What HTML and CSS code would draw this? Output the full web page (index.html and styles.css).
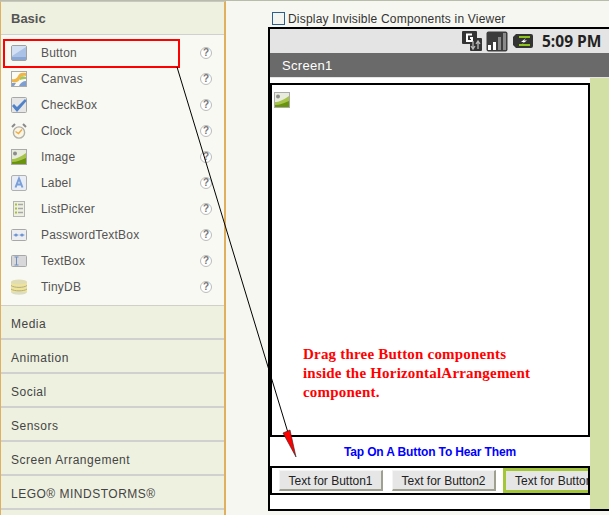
FILE: index.html
```html
<!DOCTYPE html>
<html lang="en">
<head>
    <meta charset="UTF-8">
    <title>Designer</title>
    <link rel="stylesheet" href="styles.css">
</head>
<body>
    <svg class="icon-defs" width="0" height="0">
        <symbol id="icon-image" viewBox="0 0 16 16">
            <rect x="0.5" y="0.5" width="15" height="15" fill="#e8ecdc" stroke="#aaa"/>
            <circle cx="4" cy="4.5" r="2" fill="#8c8c8c"/>
            <path d="M1 10 C5 10 9 8 15 4 V15 H1 Z" fill="#a6c34a"/>
            <path d="M1 13 C6 13 10 11 15 9 V15 H1 Z" fill="#6a9410"/>
        </symbol>
    </svg>

    <aside class="palette">
        <h2 class="drawer drawer-open">Basic</h2>
        <ul class="items">
            <li class="item item-selected">
                <svg class="item-icon" viewBox="0 0 16 16"><rect x="0.5" y="0.5" width="15" height="15" rx="1.5" fill="#a9c2e6" stroke="#a0a0a0"/><path d="M1 1 H15 V2 L1 11 Z" fill="#d3e0f3"/><rect x="1" y="12" width="14" height="3" fill="#8aa6d2"/></svg>
                <span class="item-name">Button</span>
                <span class="help">?</span>
            </li>
            <li class="item">
                <svg class="item-icon" viewBox="0 0 16 16"><rect x="0.5" y="0.5" width="15" height="15" fill="#fbfbf5" stroke="#aaa"/><path d="M1 8 C4 9 6 7 7 5 C8 2 11 1 15 2 V5 C12 4 10 5 9 8 C8 11 4 12 1 11 Z" fill="#eeb64a"/><path d="M8 15 C9 12 12 10 15 10 V15 Z" fill="#7f9fd0"/><path d="M1 12 L5 12 L3 15 H1 Z" fill="#7f9fd0"/><path d="M9 7 C10 5 12 5 15 6 V8 C13 8 11 8 9 9 Z" fill="#a8c65a"/></svg>
                <span class="item-name">Canvas</span>
                <span class="help">?</span>
            </li>
            <li class="item">
                <svg class="item-icon" viewBox="0 0 16 16"><rect x="0.5" y="0.5" width="15" height="15" rx="1" fill="#e6e6e6" stroke="#a8a8a8"/><path d="M1 9 L3 7 L6 10 L14 2 L15.5 4 L6 15 Z" fill="#4f82c8"/></svg>
                <span class="item-name">CheckBox</span>
                <span class="help">?</span>
            </li>
            <li class="item">
                <svg class="item-icon" viewBox="0 0 16 16"><circle cx="8" cy="9.5" r="5.6" fill="#faf6e6" stroke="#b0b0a8" stroke-width="1.4"/><path d="M4.5 8.5 L7.5 10.5 L11 6.5" fill="none" stroke="#efaa44" stroke-width="1.4"/><path d="M1 4 L4 1 M15 4 L12 1" stroke="#8a8a8a" stroke-width="2"/></svg>
                <span class="item-name">Clock</span>
                <span class="help">?</span>
            </li>
            <li class="item">
                <svg class="item-icon"><use href="#icon-image"/></svg>
                <span class="item-name">Image</span>
                <span class="help">?</span>
            </li>
            <li class="item">
                <svg class="item-icon" viewBox="0 0 16 16"><rect x="0.5" y="0.5" width="15" height="15" rx="1.5" fill="#e9edf5" stroke="#b0b0b0"/><path d="M4.5 12.5 L8 3.5 L11.5 12.5 M5.8 9.5 H10.2" fill="none" stroke="#7b9fd8" stroke-width="2"/></svg>
                <span class="item-name">Label</span>
                <span class="help">?</span>
            </li>
            <li class="item">
                <svg class="item-icon" viewBox="0 0 16 16"><rect x="2.5" y="0.5" width="11" height="15" fill="#eef0e2" stroke="#b4b4b4"/><path d="M4 3.5 H6 M4 7.5 H6 M4 11.5 H6" stroke="#a8c040" stroke-width="2"/><path d="M7 3.5 H12 M7 7.5 H12 M7 11.5 H12" stroke="#a8a8a8" stroke-width="1.4"/></svg>
                <span class="item-name">ListPicker</span>
                <span class="help">?</span>
            </li>
            <li class="item">
                <svg class="item-icon" viewBox="0 0 16 16"><rect x="0.5" y="2.5" width="15" height="11" rx="1" fill="#eceef2" stroke="#a8a8a8"/><circle cx="5" cy="8" r="1.6" fill="#6f94d2"/><circle cx="11" cy="8" r="1.6" fill="#6f94d2"/><path d="M2.5 8 H7.5 M8.5 8 H13.5" stroke="#6f94d2" stroke-width="0.8"/></svg>
                <span class="item-name">PasswordTextBox</span>
                <span class="help">?</span>
            </li>
            <li class="item">
                <svg class="item-icon" viewBox="0 0 16 16"><rect x="0.5" y="2.5" width="15" height="11" rx="1" fill="#d8d8da" stroke="#a8a8a8"/><path d="M3.5 4 H7.5 M5.5 4 V12 M3.5 12 H7.5" fill="none" stroke="#6f8fc4"/></svg>
                <span class="item-name">TextBox</span>
                <span class="help">?</span>
            </li>
            <li class="item">
                <svg class="item-icon" viewBox="0 0 16 16"><ellipse cx="8" cy="13" rx="8" ry="2.8" fill="#dcdcc0"/><rect x="0" y="3" width="16" height="10" fill="#efe39a"/><ellipse cx="8" cy="3" rx="8" ry="2.6" fill="#e0dcb4"/><path d="M0 6.5 C3 9 13 9 16 6.5 M0 10 C3 12.5 13 12.5 16 10" fill="none" stroke="#b0ac88"/></svg>
                <span class="item-name">TinyDB</span>
                <span class="help">?</span>
            </li>
        </ul>
        <div class="drawer">Media</div>
        <div class="drawer">Animation</div>
        <div class="drawer">Social</div>
        <div class="drawer">Sensors</div>
        <div class="drawer">Screen Arrangement</div>
        <div class="drawer">LEGO® MINDSTORMS®</div>
    </aside>

    <main class="viewer">
        <label class="invisible-toggle">
            <span class="toggle-box"></span>
            Display Invisible Components in Viewer
        </label>

        <div class="phone">
            <div class="status-bar">
                <svg class="status-icon" width="20" height="20" viewBox="0 0 20 20"><path d="M0 1 Q0 0 1 0 H14 Q15 0 15 1 V7 H19 Q20 7 20 8 V19 Q20 20 19 20 H9 Q8 20 8 19 V13 H1 Q0 13 0 12 Z" fill="#333"/><path d="M10 3.5 H5 V10 H10 V7 H8" fill="none" stroke="#fff" stroke-width="2"/><path d="M11 10 V18 M9 15 L11 18 L13 15 M16 18 V10 M14 13 L16 10 L18 13" fill="none" stroke="#b8b8b8" stroke-width="1.3"/></svg>
                <svg class="status-icon" width="22" height="21" viewBox="0 0 22 21"><rect x="0.5" y="0.5" width="21" height="20" rx="2" fill="#3c3c3c"/><rect x="2" y="14" width="3" height="5" fill="#fff"/><rect x="7" y="11" width="3" height="8" fill="#fff"/><rect x="12" y="6" width="3" height="13" fill="#8a8a8a"/><rect x="17" y="2" width="3" height="17" fill="#8a8a8a"/></svg>
                <svg class="status-icon battery" width="20" height="16" viewBox="0 0 20 16"><path d="M3 1 H18 Q20 1 20 3 V13 Q20 15 18 15 H3 L0 12 V4 Z" fill="#333"/><rect x="6" y="3" width="11" height="2" fill="#8ec31c"/><rect x="6" y="11" width="11" height="2" fill="#8ec31c"/><path d="M13 5 L8 9 H11 L9 11 L14 7.5 H11 Z" fill="#fff"/></svg>
                <span class="clock">5:09 PM</span>
            </div>
            <div class="title-bar">Screen1</div>
            <div class="screen">
                <div class="form">
                    <div class="image-box">
                        <svg class="image-placeholder"><use href="#icon-image"/></svg>
                    </div>
                    <div class="caption">Tap On A Button To Hear Them</div>
                    <div class="button-row">
                        <span class="fake-button">Text for Button1</span>
                        <span class="fake-button">Text for Button2</span>
                        <span class="fake-button fake-button-active">Text for Button3</span>
                    </div>
                </div>
                <div class="scroll-strip"></div>
            </div>
        </div>
    </main>

    <p class="note">Drag three Button components<br>inside the HorizontalArrangement<br>component.</p>

    <svg class="arrow" width="609" height="515" viewBox="0 0 609 515">
        <line x1="177" y1="67" x2="289" y2="436" stroke="#000" stroke-width="1"/>
        <polygon points="283,433 290,430 296,457" fill="#f00" stroke="#222" stroke-width="0.6"/>
    </svg>
</body>
</html>
```

FILE: styles.css
```css
*, *::after {
    box-sizing: border-box;
}

body {
    margin: 0;
    width: 609px;
    height: 515px;
    overflow: hidden;
    display: flex;
    position: relative;
    background: #f7f7f1;
    border-top: 1px solid #b8bcaa;
    font-family: "Liberation Sans", Arial, sans-serif;
    font-size: 12px;
    color: #444;
}

.icon-defs {
    position: absolute;
}

/* palette */
.palette {
    flex: none;
    width: 226px;
    height: 514px;
    background: #eef1e0;
    border-left: 1px solid #e0b060;
    border-right: 2px solid #e0b060;
    border-top: 1px solid #c8c8c0;
}

.drawer {
    height: 34px;
    margin: 0;
    padding: 4px 0 0 10px;
    display: flex;
    align-items: center;
    border-bottom: 2px solid #d0d0d0;
    font-size: 12px;
    font-weight: normal;
    letter-spacing: 0.5px;
    color: #444;
}

.drawer-open {
    height: 33px;
    padding-top: 1px;
    border-bottom-width: 1px;
    font-size: 13px;
    font-weight: bold;
    letter-spacing: 0;
    color: #555;
}

.items {
    list-style: none;
    margin: 0;
    padding: 5px 0;
    background: #f9f9f3;
    border-bottom: 1px solid #d0d0c8;
}

.item {
    height: 26px;
    display: flex;
    align-items: center;
    padding-left: 10px;
    position: relative;
}

.item-icon {
    flex: none;
    width: 16px;
    height: 16px;
}

.item-name {
    margin-left: 14px;
    letter-spacing: 0.2px;
    color: #555;
}

.help {
    position: absolute;
    left: 199px;
    top: 7px;
    width: 12px;
    height: 12px;
    border: 1px solid #bcbcbc;
    border-radius: 50%;
    background: #fff;
    font-size: 10px;
    font-weight: bold;
    line-height: 10px;
    text-align: center;
    color: #777;
}

.item-selected::after {
    content: "";
    position: absolute;
    left: 2px;
    top: -1px;
    width: 177px;
    height: 29px;
    border: 2px solid #f00;
}

/* viewer */
.viewer {
    flex: none;
    width: 383px;
    padding: 9px 0 0 42px;
    overflow: hidden;
}

.invisible-toggle {
    height: 17px;
    display: flex;
    align-items: center;
    gap: 3px;
    padding-left: 4px;
    padding-top: 1px;
    letter-spacing: 0.2px;
    color: #333;
}

.toggle-box {
    width: 13px;
    height: 13px;
    margin-top: -1px;
    border: 1px solid #2b5f8e;
    background: #f4f4f0;
}

.phone {
    width: 345px;
    height: 484px;
    border: 2px solid #000;
    background: #fff;
}

.status-bar {
    height: 24px;
    display: flex;
    align-items: center;
    gap: 4px;
    padding-left: 192px;
    background: #e4e4e4;
}

.battery {
    margin-left: 1px;
}

.clock {
    margin-left: 5px;
    font-family: "Open Sans", sans-serif;
    font-size: 15.5px;
    font-weight: bold;
    color: #222;
}

.title-bar {
    height: 24px;
    padding: 1px 0 0 12px;
    line-height: 24px;
    font-size: 13px;
    letter-spacing: 0.3px;
    background: #6a6a6a;
    color: #fff;
}

.screen {
    height: 432px;
    display: flex;
    border-top: 1px solid #e4e4e4;
}

.form {
    flex: none;
    width: 320px;
    padding-top: 5px;
}

.scroll-strip {
    flex: none;
    width: 21px;
    background: #d2dfa5;
}

.image-box {
    height: 354px;
    border: 2px solid #000;
    padding: 7px 2px;
}

.image-placeholder {
    display: block;
    width: 16px;
    height: 16px;
}

.caption {
    height: 29px;
    padding-top: 1px;
    display: flex;
    align-items: center;
    justify-content: center;
    font-size: 12px;
    font-weight: bold;
    letter-spacing: -0.14px;
    color: #00f;
}

.button-row {
    height: 29px;
    border: 2px solid #000;
    display: flex;
    align-items: flex-start;
    gap: 9px;
    padding: 2px 0 0 7px;
    overflow: hidden;
}

.fake-button {
    flex: none;
    width: 104px;
    height: 21px;
    line-height: 20px;
    text-align: center;
    background: #e6e6e6;
    border-top: 1px solid #f4f4f4;
    border-left: 1px solid #f4f4f4;
    border-right: 2px solid #a0a090;
    border-bottom: 2px solid #a0a090;
    color: #222;
}

.fake-button-active {
    margin: -2px 0 0 -2px;
    height: 25px;
    width: 108px;
    line-height: 20px;
    border: 3px solid #a4c639;
}

/* annotation drawn over the viewer */
.note {
    position: absolute;
    left: 303px;
    top: 344px;
    margin: 0;
    font-family: "Liberation Serif", serif;
    font-size: 15px;
    font-weight: bold;
    letter-spacing: 0.2px;
    line-height: 19px;
    color: #f00;
}

.arrow {
    position: absolute;
    left: 0;
    top: -1px;
}
```
